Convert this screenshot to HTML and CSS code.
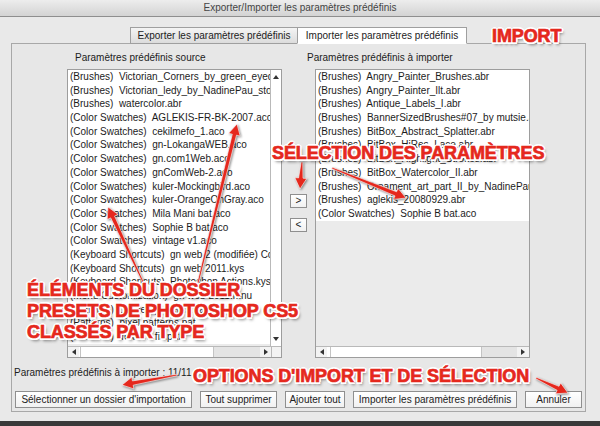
FILE: index.html
```html
<!DOCTYPE html>
<html lang="fr">
<head>
    <meta charset="UTF-8">
    <title>Exporter/Importer les paramètres prédéfinis</title>
    <link rel="stylesheet" href="styles.css">
</head>
<body>
    <div class="window">
        <div class="titlebar">Exporter/Importer les paramètres prédéfinis</div>
        <div class="tabs">
            <div class="tab">Exporter les paramètres prédéfinis</div>
            <div class="tab active">Importer les paramètres prédéfinis</div>
        </div>
        <div class="panel">
            <div class="columns">
                <div class="column">
                    <div class="col-title">Paramètres prédéfinis source</div>
                    <div class="list">
                        <div class="list-body">
                            <div class="rows">
                                <div class="row">(Brushes)  Victorian_Corners_by_green_eyed_stock.abr</div>
                                <div class="row">(Brushes)  Victorian_ledy_by_NadinePau_stock.abr</div>
                                <div class="row">(Brushes)  watercolor.abr</div>
                                <div class="row">(Color Swatches)  AGLEKIS-FR-BK-2007.aco</div>
                                <div class="row">(Color Swatches)  cekilmefo_1.aco</div>
                                <div class="row">(Color Swatches)  gn-LokangaWEB.aco</div>
                                <div class="row">(Color Swatches)  gn.com1Web.aco</div>
                                <div class="row">(Color Swatches)  gnComWeb-2.aco</div>
                                <div class="row">(Color Swatches)  kuler-Mockingbird.aco</div>
                                <div class="row">(Color Swatches)  kuler-OrangeOnGray.aco</div>
                                <div class="row">(Color Swatches)  Mila Mani bat.aco</div>
                                <div class="row">(Color Swatches)  Sophie B bat.aco</div>
                                <div class="row">(Color Swatches)  vintage v1.aco</div>
                                <div class="row">(Keyboard Shortcuts)  gn web 2 (modifiée) Copie.kys</div>
                                <div class="row">(Keyboard Shortcuts)  gn web 2011.kys</div>
                                <div class="row">(Keyboard Shortcuts)  Photoshop Actions.kys</div>
                                <div class="row">(Menu Customization)  gn web 2011.mnu</div>
                                <div class="row">(Patterns)  gn web patterns.pat</div>
                                <div class="row">(Patterns)  pixel patterns.pat</div>
                                <div class="row">(Patterns)  Texture fill.pat</div>
                            </div>
                            <div class="vscroll">
                                <span class="tri up"></span>
                                <span class="tri down"></span>
                            </div>
                        </div>
                        <div class="hscroll">
                            <span class="arrow"><span class="tri left"></span></span>
                            <span class="thumb"></span>
                            <span class="track"></span>
                            <span class="arrow"><span class="tri right"></span></span>
                            <span class="corner"></span>
                        </div>
                    </div>
                </div>

                <div class="move">
                    <button class="move-btn">&gt;</button>
                    <button class="move-btn">&lt;</button>
                </div>

                <div class="column right">
                    <div class="col-title">Paramètres prédéfinis à importer</div>
                    <div class="list">
                        <div class="list-body">
                            <div class="rows">
                                <div class="row">(Brushes)  Angry_Painter_Brushes.abr</div>
                                <div class="row">(Brushes)  Angry_Painter_Ilt.abr</div>
                                <div class="row">(Brushes)  Antique_Labels_I.abr</div>
                                <div class="row">(Brushes)  BannerSizedBrushes#07_by mutsie.abr</div>
                                <div class="row">(Brushes)  BitBox_Abstract_Splatter.abr</div>
                                <div class="row">(Brushes)  BitBox_HiRes_Lace.abr</div>
                                <div class="row">(Brushes)  BitBox_Highlight_Strokes.abr</div>
                                <div class="row">(Brushes)  BitBox_Watercolor_II.abr</div>
                                <div class="row">(Brushes)  Ornament_art_part_II_by_NadinePau_stock.abr</div>
                                <div class="row">(Brushes)  aglekis_20080929.abr</div>
                                <div class="row">(Color Swatches)  Sophie B bat.aco</div>
                            </div>
                        </div>
                        <div class="hscroll wide">
                            <span class="arrow"><span class="tri left"></span></span>
                            <span class="thumb"></span>
                            <span class="track"></span>
                            <span class="arrow"><span class="tri right"></span></span>
                        </div>
                    </div>
                </div>
            </div>

            <div class="count">Paramètres prédéfinis à importer : 11/11</div>

            <div class="actions">
                <button class="btn btn-folder">Sélectionner un dossier d'importation</button>
                <button class="btn btn-clear">Tout supprimer</button>
                <button class="btn btn-all">Ajouter tout</button>
                <button class="btn btn-import">Importer les paramètres prédéfinis</button>
                <button class="btn btn-cancel">Annuler</button>
            </div>
        </div>
    </div>

    <!-- annotations -->
    <svg class="arrows" width="600" height="426" viewBox="0 0 600 426">
        <g fill="#e5281d" stroke="#fff" stroke-width="0.6">
            <polygon points="198.8,283.2 236.5,135.2 240.2,136.1 237,124 228.6,133.3 232.3,134.2 197.2,282.8"/>
            <polygon points="143.7,281.7 114.6,216.0 118.1,214.4 108,207 107.2,219.5 110.7,217.9 142.3,282.3"/>
            <polygon points="302.8,162.1 303.0,178.2 306.8,178.5 300,189 294.8,177.6 298.6,177.9 301.2,161.9"/>
            <polygon points="331.7,168.7 395.0,195.9 393.6,199.4 406,198 398.1,188.3 396.6,191.8 332.3,167.3"/>
            <polygon points="177.1,375.8 133.2,385.2 133.9,388.9 122,385 131.8,377.1 132.4,380.9 176.9,374.2"/>
            <polygon points="535.7,378.7 557.1,390.3 555.5,393.8 568,393 560.6,382.9 559.0,386.3 536.3,377.3"/>
        </g>
    </svg>

    <div class="note note-import">IMPORT</div>
    <div class="note note-select">SÉLECTION DES PARAMÈTRES</div>
    <div class="note note-folder">ÉLÉMENTS DU DOSSIER<br>PRESETS DE PHOTOSHOP CS5<br>CLASSÉS PAR TYPE</div>
    <div class="note note-options">OPTIONS D'IMPORT ET DE SÉLECTION</div>
</body>
</html>
```

FILE: styles.css
```css
body {
    margin: 0;
    width: 600px;
    height: 426px;
    overflow: hidden;
    position: relative;
    background-color: #3a3a3a;
    font-family: "Liberation Sans", Arial, sans-serif;
    font-size: 10px;
    color: #1c1c1c;
}
.window {
    height: 421px;
    background-color: #e9e9e9;
}
.titlebar {
    height: 16px;
    line-height: 16px;
    text-align: center;
    color: #444;
    background: linear-gradient(#ededed, #d3d3d3);
    border-bottom: 1px solid #8e8e8e;
}

/* tabs */
.tabs {
    display: flex;
    height: 16px;
    margin-top: 10px;
    padding-left: 130px;
    position: relative;
    z-index: 1;
}
.tab {
    width: 168px;
    height: 17px;
    box-sizing: border-box;
    line-height: 15px;
    text-align: center;
    border: 1px solid #9f9f9f;
    background: linear-gradient(#f4f4f4, #dcdcdc);
}
.tab + .tab {
    margin-left: -1px;
    width: 170px;
}
.tab.active {
    background: #fff;
    border-bottom-color: #fff;
}

/* panel */
.panel {
    margin: 0 14px 0 11px;
    padding: 7px 2px 3px 2px;
    border: 1px solid #a8a8a8;
    background-color: #e7e7e7;
}
.columns {
    display: flex;
    margin-left: 53px;
}
.column {
    width: 215px;
}
.col-title {
    height: 13px;
    line-height: 13px;
    margin-bottom: 5px;
    padding-left: 8px;
    white-space: nowrap;
}
.column.right .col-title {
    padding-left: 0;
    margin-left: -8px;
}
.list {
    height: 289px;
    box-sizing: border-box;
    border: 1px solid #9d9d9d;
    background-color: #ebebeb;
    display: flex;
    flex-direction: column;
}
.list-body {
    flex: 1;
    display: flex;
    overflow: hidden;
}
.rows {
    flex: 1;
    overflow: hidden;
}
.row {
    height: 13.7px;
    line-height: 13.7px;
    padding-left: 2px;
    white-space: pre;
    background-color: #fff;
}
.vscroll {
    width: 10px;
    border-left: 1px solid #b9b9b9;
    background-color: #fff;
    display: flex;
    flex-direction: column;
    justify-content: space-between;
    align-items: center;
    padding: 5px 0 5px;
}
.hscroll {
    height: 10px;
    border-top: 1px solid #b9b9b9;
    display: flex;
    background-color: #fff;
}
.hscroll .arrow {
    width: 11px;
    display: flex;
    align-items: center;
    justify-content: center;
    background-color: #f3f3f3;
}
.hscroll .thumb {
    width: 132px;
    margin-left: 1px;
    border-left: 1px solid #c4c4c4;
    border-right: 1px solid #c4c4c4;
    background-color: #fff;
}
.hscroll .track {
    flex: 1;
    background-color: #e4e4e4;
}
.hscroll .corner {
    width: 9px;
    border-left: 1px solid #b9b9b9;
    background-color: #f3f3f3;
}
.hscroll.wide .thumb {
    width: 150px;
    margin-left: 3px;
}
.hscroll.wide .arrow:last-child {
    width: 12px;
}
.tri {
    display: block;
    width: 0;
    height: 0;
    border: 3px solid transparent;
}
.tri.up { border-bottom: 4px solid #333; border-top: 0; }
.tri.down { border-top: 4px solid #333; border-bottom: 0; }
.tri.left { border-right: 4px solid #333; border-left: 0; }
.tri.right { border-left: 4px solid #333; border-right: 0; }

/* > < buttons */
.move {
    display: flex;
    flex-direction: column;
    justify-content: center;
    gap: 10px;
    margin: 16px 8px 0;
}
.move-btn {
    width: 17px;
    height: 14px;
    padding: 0;
    border: 1px solid #8f8f8f;
    background: linear-gradient(#fff, #f1f1f1);
    font-family: "Liberation Sans", Arial, sans-serif;
    font-size: 10px;
    line-height: 12px;
    color: #222;
}

.count {
    margin-top: 9px;
    height: 12px;
    line-height: 12px;
}

.actions {
    display: flex;
    gap: 8px;
    margin-top: 12px;
    padding-left: 1px;
}
.btn {
    height: 17px;
    padding: 0;
    border: 1px solid #8f8f8f;
    background: linear-gradient(#fff, #f1f1f1);
    font-family: "Liberation Sans", Arial, sans-serif;
    font-size: 10px;
    line-height: 15px;
    color: #222;
    white-space: nowrap;
}
.btn-folder { width: 177px; }
.btn-clear { width: 77px; }
.btn-all { width: 60px; }
.btn-import { width: 164px; }
.btn-cancel { width: 57px; }

/* red annotations */
.arrows {
    position: absolute;
    left: 0;
    top: 0;
    pointer-events: none;
    filter: drop-shadow(1px 1px 1px rgba(0,0,0,0.45));
}
.note {
    position: absolute;
    font-family: "Liberation Sans", Arial, sans-serif;
    font-weight: bold;
    font-size: 18px;
    line-height: 18px;
    letter-spacing: -0.1px;
    color: #e5281d;
    -webkit-text-stroke: 0.7px #e5281d;
    white-space: nowrap;
    text-shadow:
        -1.5px -1.5px 0 #fff, 1.5px -1.5px 0 #fff, -1.5px 1.5px 0 #fff, 1.5px 1.5px 0 #fff,
        0 -2px 0 #fff, 0 2px 0 #fff, -2px 0 0 #fff, 2px 0 0 #fff,
        2px 3px 3px rgba(0,0,0,0.5);
}
.note-import { left: 492px; top: 27px; }
.note-select { left: 272px; top: 144px; }
.note-folder { left: 27px; top: 280px; line-height: 21px; }
.note-options { left: 193px; top: 367px; }
```
